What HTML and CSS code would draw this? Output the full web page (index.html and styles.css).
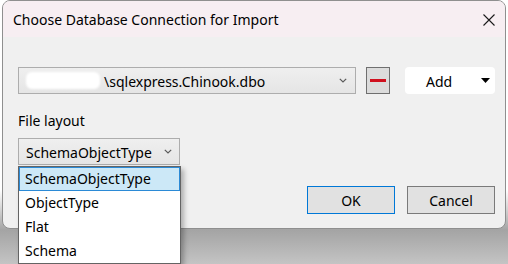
FILE: index.html
```html
<!DOCTYPE html>
<html lang="en">
<head>
    <meta charset="UTF-8">
    <title>Choose Database Connection for Import</title>
    <link rel="stylesheet" href="styles.css">
</head>
<body>
    <div class="dialog">
        <!-- Title bar -->
        <div class="titlebar">
            <span class="title">Choose Database Connection for Import</span>
            <svg class="close" width="12" height="12" viewBox="0 0 12 12">
                <path d="M0.5 0.5 L11.5 11.5 M11.5 0.5 L0.5 11.5" stroke="#1a1a1a" stroke-width="1.1" fill="none"/>
            </svg>
        </div>

        <div class="content">
            <!-- Connection row -->
            <div class="conn-row">
                <div class="combo conn">
                    <span class="redact"></span>
                    <span class="combo-text">\sqlexpress.Chinook.dbo</span>
                    <svg class="chev" width="8" height="5" viewBox="0 0 8 5">
                        <polyline points="0.8,0.8 4,4 7.2,0.8" stroke="#5a5a5a" stroke-width="1.2" fill="none"/>
                    </svg>
                </div>
                <button class="remove"><span class="minus"></span></button>
                <button class="add">
                    <span>Add</span>
                    <svg class="caret" width="9" height="5" viewBox="0 0 9 5">
                        <polygon points="0,0 9,0 4.5,5" fill="#000"/>
                    </svg>
                </button>
            </div>

            <div class="label">File layout</div>

            <!-- Layout dropdown, shown open -->
            <div class="layout-wrap">
                <div class="combo layout">
                    <span class="combo-text">SchemaObjectType</span>
                    <svg class="chev" width="8" height="5" viewBox="0 0 8 5">
                        <polyline points="0.8,0.8 4,4 7.2,0.8" stroke="#5a5a5a" stroke-width="1.2" fill="none"/>
                    </svg>
                </div>
                <ul class="droplist">
                    <li class="selected">SchemaObjectType</li>
                    <li>ObjectType</li>
                    <li>Flat</li>
                    <li>Schema</li>
                </ul>
            </div>

            <!-- Dialog buttons -->
            <div class="footer">
                <button class="btn default">OK</button>
                <button class="btn">Cancel</button>
            </div>
        </div>
    </div>
</body>
</html>
```

FILE: styles.css
```css
html, body {
    margin: 0;
    padding: 0;
}

body {
    width: 508px;
    height: 264px;
    overflow: hidden;
    font-family: "Noto Sans", "Liberation Sans", sans-serif;
    font-size: 14px;
    color: #000;
    background: linear-gradient(to bottom, #ffffff 0, #ffffff 190px, #a4a4a4 230px, #c4c4c4 264px);
}

.dialog {
    margin-left: 2px;
    width: 504px;
    box-sizing: border-box;
    border: 1px solid #8f8f8f;
    border-radius: 8px;
    background-color: #f0f0f0;
    overflow: visible;
}

.titlebar {
    height: 36px;
    display: flex;
    align-items: center;
    padding: 2px 10px 0 10px;
    box-sizing: border-box;
    background-color: #f7eef2; /* pinkish caption */
    border-radius: 7px 7px 0 0;
}

.title {
    line-height: 20px;
    flex: 1;
}

.close {
    display: block;
    margin-top: -1px;
}

.content {
    padding: 30px 10px 14px 15px;
}

.conn-row {
    display: flex;
    align-items: center;
    height: 27px;
}

.combo {
    display: flex;
    align-items: center;
    box-sizing: border-box;
    height: 27px;
    padding: 2px 8px 0 7px;
    border: 1px solid #adadad;
    background: linear-gradient(to bottom, #efefef, #e5e5e5);
    line-height: 20px;
}

.combo-text {
    flex: 1;
    white-space: nowrap;
}

.conn {
    width: 338px;
}

.redact {
    width: 74px;
    height: 17px;
    margin-right: 4px;
    margin-top: -2px;
    background: #fff;
    border-radius: 6px;
    filter: blur(1.2px);
}

.chev {
    display: block;
    margin-top: -2px;
}

.remove {
    margin-left: 10px;
    width: 24px;
    height: 27px;
    box-sizing: border-box;
    border: 1px solid #6f6f6f;
    background-color: #dcdcdc;
    padding: 0;
    display: flex;
    align-items: center;
    justify-content: center;
}

.minus {
    display: block;
    width: 16px;
    height: 3px;
    background-color: #d0101e;
}

.add {
    margin-left: 15px;
    width: 90px;
    height: 27px;
    box-sizing: border-box;
    border: none;
    border-radius: 4px;
    background-color: #fff;
    font: inherit;
    color: #000;
    line-height: 20px;
    display: flex;
    align-items: center;
    padding: 2px 5px 0 21px;
}

.caret {
    display: block;
    margin-left: auto;
    margin-top: -2px;
}

.label {
    margin-top: 17px;
    line-height: 20px;
}

.layout-wrap {
    position: relative;
    margin-top: 7px;
    width: 162px;
}

.layout {
    width: 162px;
    padding-right: 7px;
}

/* open dropdown list lies over the dialog */
.droplist {
    position: absolute;
    left: 0;
    top: calc(100% + 1px);
    width: 163px;
    box-sizing: border-box;
    margin: 0;
    padding: 0;
    list-style: none;
    background-color: #fff;
    border: 1px solid #646464;
    box-shadow: 3px 3px 5px rgba(0, 0, 0, 0.28);
    z-index: 2;
}

.droplist li {
    height: 24px;
    line-height: 24px;
    padding-left: 6px;
    box-sizing: border-box;
    white-space: nowrap;
}

.droplist li.selected {
    background-color: #cce8f7;
    border: 1px solid #2b8ad6;
    padding-left: 5px;
    line-height: 22px;
}

.footer {
    display: flex;
    justify-content: flex-end;
    gap: 12px;
    margin-top: 21px;
}

.btn {
    width: 88px;
    height: 28px;
    box-sizing: border-box;
    border: 1px solid #7a7a7a;
    background-color: #e1e1e1;
    font: inherit;
    color: #000;
    line-height: 20px;
    padding: 1px 0 0 0;
}

.btn.default {
    border-color: #0078d7;
}
```
